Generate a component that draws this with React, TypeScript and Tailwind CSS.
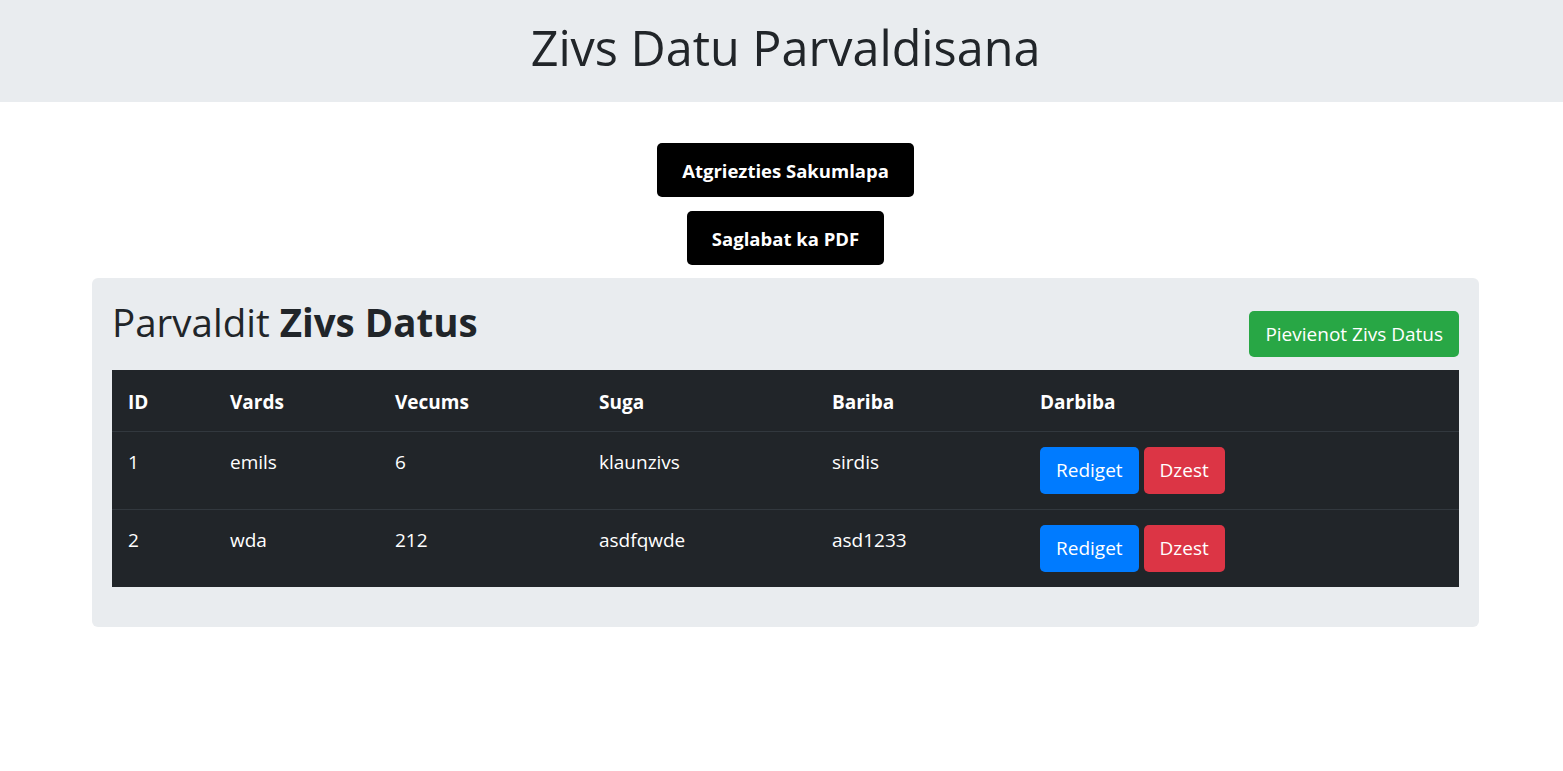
const fish = [
  { id: 1, name: "emils", age: "6", species: "klaunzivs", food: "sirdis" },
  { id: 2, name: "wda", age: "212", species: "asdfqwde", food: "asd1233" },
];

const cols = "grid grid-cols-[102px_165px_204px_233px_208px_1fr]";

export default function App() {
  return (
    <div className="min-h-screen bg-white font-['Segoe_UI','Open_Sans',sans-serif] text-[#212529]">
      <header className="bg-[#e9ecef] h-[102px] flex items-center justify-center pl-[8px]">
        <h1 className="text-[48.5px] leading-[1.2] font-normal -mt-[8px]">Zivs Datu Parvaldisana</h1>
      </header>

      <div className="flex flex-col items-center gap-[14px] mt-[41px] pl-[8px]">
        <button className="bg-black text-white font-bold text-[18.5px] leading-[24px] px-[25px] pt-[16px] pb-[14px] rounded-[5px]">
          Atgriezties Sakumlapa
        </button>
        <button className="bg-black text-white font-bold text-[18.5px] leading-[24px] px-[25px] pt-[16px] pb-[14px] rounded-[5px]">
          Saglabat ka PDF
        </button>
      </div>

      <section className="ml-[92px] mr-[84px] mt-[13px] bg-[#e9ecef] rounded-[6px] px-[20px] pt-[20px] pb-[40px]">
        <div className="flex justify-between items-start">
          <h2 className="text-[38.5px] leading-[48px] font-normal">
            Parvaldit <b className="font-bold">Zivs Datus</b>
          </h2>
          <button className="mt-[13px] bg-[#28a745] text-white text-[19px] leading-[30px] px-[16px] py-[8px] rounded-[5px]">
            Pievienot Zivs Datus
          </button>
        </div>

        <div className="mt-[13px] bg-[#212529] text-white text-[19px]">
          <div className={`${cols} font-bold h-[61px] items-center pt-[3px]`}>
            <div className="px-[16px]">ID</div>
            <div className="px-[16px]">Vards</div>
            <div className="px-[16px]">Vecums</div>
            <div className="px-[16px]">Suga</div>
            <div className="px-[16px]">Bariba</div>
            <div className="px-[16px]">Darbiba</div>
          </div>
          {fish.map((f) => (
            <div key={f.id} className={`${cols} border-t border-[#32383e] pt-[15px] pb-[15px]`}>
              <div className="px-[16px] leading-[30px]">{f.id}</div>
              <div className="px-[16px] leading-[30px]">{f.name}</div>
              <div className="px-[16px] leading-[30px]">{f.age}</div>
              <div className="px-[16px] leading-[30px]">{f.species}</div>
              <div className="px-[16px] leading-[30px]">{f.food}</div>
              <div className="px-[16px] flex gap-[5px]">
                <button className="bg-[#007bff] text-white text-[19px] leading-[31px] px-[16px] py-[8px] rounded-[5px]">
                  Rediget
                </button>
                <button className="bg-[#dc3545] text-white text-[19px] leading-[31px] px-[16px] py-[8px] rounded-[5px]">
                  Dzest
                </button>
              </div>
            </div>
          ))}
        </div>
      </section>
    </div>
  );
}
